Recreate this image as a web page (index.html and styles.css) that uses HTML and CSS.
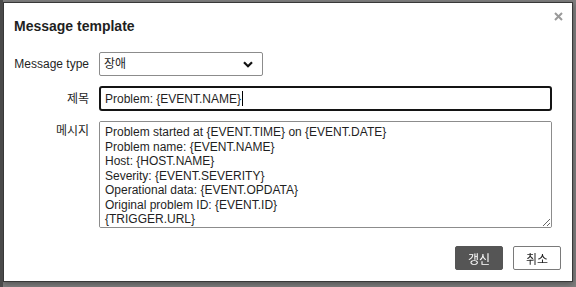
FILE: index.html
```html
<!DOCTYPE html>
<html lang="ko">
<head>
  <meta charset="UTF-8" />
  <title>Message template</title>
  <link rel="stylesheet" href="styles.css">
</head>
<body>

  <div class="dialog">
    <div class="dialog-head">
      <h4>Message template</h4>
      <button class="btn-close" title="Close">
        <svg width="9" height="9" viewBox="0 0 9 9"><path d="M1 1L8 8M8 1L1 8" stroke="#9a9a9a" stroke-width="2"/></svg>
      </button>
    </div>

    <form class="form-grid">
      <label class="label" for="mtype">Message type</label>
      <div class="select-wrap">
        <select id="mtype" class="ctl select">
          <option>장애</option>
          <option>복구</option>
        </select>
        <svg class="arrow" width="10" height="7" viewBox="0 0 10 7"><path d="M1 1.2L5 5.2L9 1.2" fill="none" stroke="#111" stroke-width="2.2"/></svg>
      </div>

      <label class="label" for="subject">제목</label>
      <div class="input-wrap">
        <input id="subject" class="ctl input focused" type="text" value="Problem: {EVENT.NAME}" />
        <span class="caret"></span>
      </div>

      <label class="label label-top" for="message">메시지</label>
      <textarea id="message" class="ctl textarea">Problem started at {EVENT.TIME} on {EVENT.DATE}
Problem name: {EVENT.NAME}
Host: {HOST.NAME}
Severity: {EVENT.SEVERITY}
Operational data: {EVENT.OPDATA}
Original problem ID: {EVENT.ID}
{TRIGGER.URL}</textarea>
    </form>

    <div class="dialog-foot">
      <button class="btn btn-main">갱신</button>
      <button class="btn btn-alt">취소</button>
    </div>
  </div>

</body>
</html>
```

FILE: styles.css
```css
* {
  box-sizing: border-box;
  margin: 0;
  padding: 0;
}

body {
  font-family: 'Liberation Sans', Arial, 'Noto Sans CJK KR', sans-serif;
  font-size: 12px;
  color: #1f1f1f;
  background: #7f7f7f;
  height: 287px;
  overflow: hidden;
  padding-top: 2px;
  border-left: 3px solid #4a4a4a;
}

.dialog {
  width: 570px;
  height: 280px;
  background: #fff;
  border: 1px solid #383838;
  box-shadow: 0 2px 6px rgba(0,0,0,0.35);
  display: flex;
  flex-direction: column;
}

.dialog-head {
  display: flex;
  justify-content: space-between;
  align-items: flex-start;
  padding: 15px 8px 0 10px;
  height: 49px;
}

.dialog-head h4 {
  font-size: 14px;
  font-weight: bold;
  line-height: 16px;
  color: #1f1f1f;
}

.btn-close {
  border: none;
  background: none;
  width: 11px;
  height: 11px;
  margin-top: -9px;
  cursor: pointer;
}

.form-grid {
  display: grid;
  grid-template-columns: 85px 453px;
  column-gap: 10px;
  row-gap: 10px;
  align-items: center;
}

.label {
  text-align: right;
  line-height: 14px;
}

.label-top {
  align-self: start;
  padding-top: 3px;
}

.ctl {
  font-family: 'Liberation Sans', Arial, 'Noto Sans CJK KR', sans-serif;
  font-size: 12px;
  color: #1f1f1f;
  background: #fff;
  border: 1px solid #8c8c8c;
  border-radius: 2px;
  outline: none;
}

.select-wrap {
  position: relative;
  width: 164px;
}

.select {
  appearance: none;
  -webkit-appearance: none;
  width: 164px;
  height: 24px;
  padding: 0 4px;
}

.select-wrap .arrow {
  position: absolute;
  right: 10px;
  top: 9px;
  pointer-events: none;
}

.input-wrap {
  position: relative;
}

.input {
  width: 100%;
  height: 25px;
  padding: 0 5px;
}

.input.focused {
  border: 2px solid #141414;
  border-radius: 3px;
  padding: 0 4px;
}

.caret {
  position: absolute;
  left: 143px;
  top: 5px;
  width: 1px;
  height: 15px;
  background: #000;
}

.textarea {
  height: 107px;
  padding: 3px 5px;
  line-height: 14.5px;
  resize: vertical;
}

.dialog-foot {
  display: flex;
  justify-content: flex-end;
  gap: 10px;
  padding: 18px 11px 0 0;
}

.btn {
  width: 48px;
  height: 24px;
  font-family: 'Noto Sans CJK KR', sans-serif;
  font-size: 12px;
  border-radius: 2px;
  cursor: pointer;
}

.btn-main {
  background: #555;
  border: 1px solid #555;
  color: #fff;
}

.btn-alt {
  background: #fff;
  border: 1px solid #7a7a7a;
  color: #1f1f1f;
}
```
